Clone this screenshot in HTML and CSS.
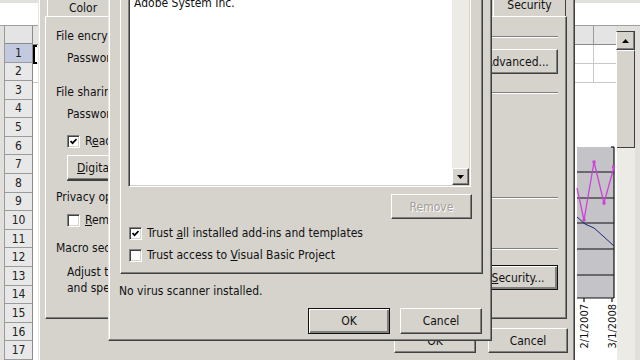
FILE: index.html
```html
<!DOCTYPE html>
<html>
<head>
<meta charset="utf-8">
<link rel="stylesheet" href="styles.css">
</head>
<body>
<div class="desk">
  <div class="excel">
    <div class="xl-formula"></div>
    <div class="xl-sheet">
      <div class="rowheads">
        <div class="corner"></div>
        <div class="rn sel">1</div><div class="rn">2</div><div class="rn">3</div><div class="rn">4</div>
        <div class="rn">5</div><div class="rn">6</div><div class="rn">7</div><div class="rn">8</div>
        <div class="rn">9</div><div class="rn">10</div><div class="rn">11</div><div class="rn">12</div>
        <div class="rn">13</div><div class="rn">14</div><div class="rn">15</div><div class="rn">16</div>
        <div class="rn">17</div>
      </div>
      <div class="cells">
        <div class="colhdr"></div>
        <div class="grid">
          <div class="activecell"></div>
          <svg class="chart" width="42" height="280" viewBox="0 0 42 280">
            <rect x="0" y="0" width="42" height="280" fill="#fff"/>
            <rect x="2" y="64" width="37" height="151" fill="#c3c3c8"/>
            <g stroke="#111" stroke-width="1.2">
              <line x1="2" y1="89" x2="39" y2="89"/>
              <line x1="2" y1="115" x2="39" y2="115"/>
              <line x1="2" y1="140" x2="39" y2="140"/>
              <line x1="2" y1="166" x2="39" y2="166"/>
              <line x1="2" y1="192" x2="39" y2="192"/>
              <line x1="39" y1="64" x2="39" y2="215"/>
              <line x1="36" y1="64" x2="39" y2="64"/>
              <line x1="2" y1="215" x2="39" y2="215"/>
              <line x1="9" y1="215" x2="9" y2="219"/>
              <line x1="37" y1="215" x2="37" y2="219"/>
            </g>
            <polyline points="2,105 9,137 19,79 29,120 39,84" fill="none" stroke="#d040d8" stroke-width="1.3"/>
            <g fill="#d040d8">
              <rect x="7.5" y="135.5" width="3" height="3"/>
              <rect x="17.5" y="77.5" width="3" height="3"/>
              <rect x="27.5" y="118.5" width="3" height="3"/>
              <rect x="37" y="82.5" width="3" height="3"/>
            </g>
            <polyline points="2,134 10,141 19,145 28,153 39,163" fill="none" stroke="#1c2a78" stroke-width="1"/>
            <text class="axl" transform="rotate(-90 13 221)" x="13" y="221" text-anchor="end">2/1/2007</text>
            <text class="axl" transform="rotate(-90 41 221)" x="41" y="221" text-anchor="end">3/1/2008</text>
          </svg>
        </div>
      </div>
      <div class="vscroll">
        <div class="sbtn"><svg width="7" height="4" viewBox="0 0 7 4"><path d="M3.5 0 L7 4 L0 4 Z" fill="#000"/></svg></div>
        <div class="thumb"></div>
        <div class="track"></div>
      </div>
      <div class="frame"></div>
    </div>
  </div>

  <div class="dlg opts">
    <div class="tabs">
      <div class="tab">Color</div>
      <div class="tabgap"></div>
      <div class="tab active">Security</div>
    </div>
    <div class="panel opanel">
      <div class="ghead"><span>File encryption settings for this workbook</span><i></i></div>
      <div class="orow r1">
        <span class="ind">Password to open:</span>
        <div class="btn w82">Advanced...</div>
      </div>
      <div class="ghead g2"><span>File sharing settings for this workbook</span><i></i></div>
      <div class="orow r2"><span class="ind">Password to modify:</span></div>
      <div class="chkrow c1"><span class="chk on"><svg width="7" height="7" viewBox="0 0 7 7"><path d="M0.5 3 L2.6 5.2 L6.6 1" stroke="#000" stroke-width="1.7" fill="none"/></svg></span><span>R<u>e</u>ad-only recommended</span></div>
      <div class="btn digital"><span><u>D</u>igital Signatures...</span></div>
      <div class="ghead g3"><span>Privacy options</span><i></i></div>
      <div class="chkrow c2"><span class="chk"></span><span><u>R</u>emove personal information from file properties on save</span></div>
      <div class="ghead g4"><span>Macro security</span><i></i></div>
      <div class="orow r3">
        <p class="ind para">Adjust the security level for opening files that might contain macro viruses<br>and specify the names of trusted macro developers.</p>
        <div class="btn def w116"><span>Macro <u>S</u>ecurity...</span></div>
      </div>
    </div>
    <div class="btnrow obtns">
      <div class="btn w82">OK</div>
      <div class="btn w80">Cancel</div>
    </div>
  </div>

  <div class="dlg sec">
    <div class="panel spanel">
      <div class="listbox">
        <div class="items"><div class="item">Adobe System Inc.</div></div>
        <div class="lscroll">
          <div class="sbtn"><svg width="7" height="4" viewBox="0 0 7 4"><path d="M3.5 0 L7 4 L0 4 Z" fill="#000"/></svg></div>
          <div class="ltrack"></div>
          <div class="sbtn"><svg width="7" height="4" viewBox="0 0 7 4"><path d="M0 0 L7 0 L3.5 4 Z" fill="#000"/></svg></div>
        </div>
      </div>
      <div class="rmrow"><div class="btn w81 disabled">Remove</div></div>
      <div class="chkrow s1"><span class="chk on"><svg width="7" height="7" viewBox="0 0 7 7"><path d="M0.5 3 L2.6 5.2 L6.6 1" stroke="#000" stroke-width="1.7" fill="none"/></svg></span><span>Trust <u>a</u>ll installed add-ins and templates</span></div>
      <div class="chkrow s2"><span class="chk"></span><span>Trust access to <u>V</u>isual Basic Project</span></div>
    </div>
    <div class="status">No virus scanner installed.</div>
    <div class="btnrow sbtns">
      <div class="btn def w82">OK</div>
      <div class="btn w82">Cancel</div>
    </div>
  </div>
</div>
</body>
</html>
```

FILE: styles.css
```css
* { box-sizing: border-box; }
html, body { margin: 0; padding: 0; }
body {
  width: 640px; height: 360px; overflow: hidden;
  font-family: Tahoma, "DejaVu Sans Condensed", "DejaVu Sans", sans-serif;
  font-size: 11px; color: #111;
}
.desk { position: relative; width: 640px; height: 360px; overflow: hidden; background: #d6d3cd; }

/* Excel background */
.excel { display: flex; flex-direction: column; width: 640px; height: 360px; }
.xl-formula { height: 26px; background: #fff; border-top: 3px solid #e2e0dc; border-bottom: 1px solid #a0a0a0; }
.xl-sheet { flex: 1; display: flex; min-height: 0; padding-left: 4px; background: #e2e0dc; }
.rowheads { width: 29px; display: flex; flex-direction: column; background: #e6e6e6; border-left: 1px solid #9a9a9a; }
.corner { height: 19px; border-bottom: 1px solid #8a8a8a; border-right: 1px solid #8a8a8a; background: #e4e4e4; }
.rn {
  height: 18.6px; flex: none; display: flex; align-items: center; justify-content: center;
  font-family: Tahoma, "DejaVu Sans Condensed", "DejaVu Sans", sans-serif; font-size: 12px; color: #222;
  border-bottom: 1px solid #9c9c9c; border-right: 1px solid #8a8a8a; background: #e8e8e8;
}
.rn.sel { background: #c3c9de; }
.cells { flex: 1; display: flex; flex-direction: column; min-width: 0; }
.colhdr {
  height: 19px; flex: none; background: #e4e4e4; border-bottom: 1px solid #8a8a8a;
  background-image: linear-gradient(to right, transparent 560px, #9a9a9a 560px, #9a9a9a 561px, transparent 561px);
}
.grid {
  position: relative; flex: 1; background: #fff;
  background-image:
    linear-gradient(to bottom, transparent 17.6px, #c8c8c8 17.6px, #c8c8c8 18.6px, transparent 18.6px),
    linear-gradient(to bottom, transparent 36.6px, #c8c8c8 36.6px, #c8c8c8 37.6px, transparent 37.6px),
    linear-gradient(to right, transparent 560px, #c8c8c8 560px, #c8c8c8 561px, transparent 561px);
  background-size: 100% 100%, 100% 100%, 100% 40px;
  background-repeat: no-repeat;
}
.activecell { position: absolute; left: 0; top: 0; width: 4px; height: 19px; border-left: 2px solid #000; border-top: 2px solid #000; border-bottom: 2px solid #000; }
.chart { position: absolute; left: 542px; top: 38px; }
.axl { font-family: Tahoma, "DejaVu Sans Condensed", "DejaVu Sans", sans-serif; font-size: 11px; fill: #111; }
.vscroll { width: 19px; display: flex; flex-direction: column; padding-top: 5px; background: #e2e0dc; }
.vscroll .sbtn { height: 19px; border-top: 1px solid #404040; }
.thumb { height: 98px; background: #d6d3cd; border: 1px solid; border-color: #fff #404040 #404040 #fff; }
.track { flex: 1; background: #ecebe6; }
.frame { width: 5px; background: #e2e0dc; }

.sbtn {
  flex: none; display: flex; align-items: center; justify-content: center;
  background: #d6d3cd; border: 1px solid; border-color: #fff #404040 #404040 #fff;
  box-shadow: inset -1px -1px 0 #808080;
}

/* dialogs */
.dlg {
  position: absolute; background: #d6d3cd;
  border: 1px solid; border-color: #e8e6e2 #404040 #404040 #e8e6e2;
  box-shadow: inset -1px -1px 0 #808080, inset 1px 1px 0 #fff;
  display: flex; flex-direction: column;
}
.panel {
  border: 1px solid; border-color: #fff #404040 #404040 #fff;
  box-shadow: inset -1px -1px 0 #808080;
}
.btn {
  flex: none; height: 25px; display: flex; align-items: center; justify-content: center;
  background: #d6d3cd; border: 1px solid; border-color: #fff #404040 #404040 #fff;
  box-shadow: inset -1px -1px 0 #808080; color: #111; white-space: nowrap; overflow: hidden;
}
.btn.def { border: 1px solid #111; box-shadow: inset 1px 1px 0 #fff, inset -2px -2px 0 #808080; }
.btn.disabled { color: #a3a09a; text-shadow: 1px 1px 0 #fff; }
.w80 { width: 80px; } .w81 { width: 81px; } .w82 { width: 82px; } .w116 { width: 116px; }

.chk {
  flex: none; width: 13px; height: 13px; background: #fff; display: flex; align-items: center; justify-content: center;
  border: 1px solid; border-color: #808080 #fff #fff #808080;
  box-shadow: inset 1px 1px 0 #404040, inset -1px -1px 0 #d6d3cd;
}
.chkrow { display: flex; align-items: center; height: 13px; line-height: 13px; white-space: nowrap; }
.chkrow .chk + span { margin-left: 5px; }

/* options dialog (back) */
.opts { left: 38px; top: -6px; width: 537px; height: 380px; padding: 0 7px 0 6px; }
.tabs { height: 21px; display: flex; align-items: flex-end; padding-left: 2px; }
.tab {
  height: 17px; padding-top: 1px; width: 72px; text-align: center; line-height: 14px;
  border: 1px solid; border-bottom: none; border-color: #fff #404040 transparent #fff;
  border-radius: 2px 2px 0 0; font-size: 12px;
}
.tab.active { height: 20px; width: 73px; margin-right: 1px; line-height: 16px; padding-top: 0; }
.tabgap { flex: 1; }
.opanel { height: 303px; padding: 13px 8px 0 10px; display: flex; flex-direction: column; font-size: 12px; }
.ghead { display: flex; align-items: center; height: 13px; line-height: 13px; white-space: nowrap; }
.ghead i { flex: 1; margin-left: 5px; height: 2px; border-top: 1px solid #808080; border-bottom: 1px solid #fff; }
.ind { margin-left: 11px; white-space: nowrap; }
.orow { display: flex; justify-content: space-between; align-items: flex-start; }
.r1 { margin-top: 6px; height: 25px; padding-top: 2px; }
.r1 .btn { margin-top: -2px; }
.g2 { margin-top: 12px; }
.r2 { margin-top: 9px; height: 13px; line-height: 13px; }
.c1 { margin-top: 14px; margin-left: 11px; }
.digital { width: 120px; margin-top: 7px; margin-left: 11px; justify-content: flex-start; padding-left: 9px; box-shadow: inset -1px -1px 0 #808080, 0 1px 0 #404040; }
.g3 { margin-top: 11px; }
.c2 { margin-top: 10px; margin-left: 11px; }
.g4 { margin-top: 15px; }
.r3 { margin-top: 9px; height: 32px; }
.para { flex: 1; min-width: 0; overflow: hidden; margin: 0 8px 0 11px; line-height: 16px; white-space: nowrap; }
.r3 .btn { margin-top: 1px; }
.btnrow { display: flex; justify-content: flex-end; }
.obtns { margin-top: 9px; gap: 12px; margin-right: -1px; font-size: 12px; }

/* security dialog (front) */
.sec { left: 108px; top: -40px; width: 384px; height: 381px; padding: 10px 8px 0 11px; }
.spanel { height: 303px; padding: 9px 0 0 7px; display: flex; flex-direction: column; }
.listbox {
  width: 343px; height: 206px; flex: none; background: #fff; display: flex;
  border: 1px solid; border-color: #808080 #fff #fff #808080;
  box-shadow: inset 1px 1px 0 #404040, inset -1px -1px 0 #d6d3cd;
  padding: 1px;
}
.items { flex: 1; padding: 14px 0 0 4px; }
.item { line-height: 13px; font-size: 12px; }
.lscroll { width: 17px; display: flex; flex-direction: column; }
.lscroll .sbtn { height: 17px; }
.ltrack { flex: 1; background: #ecebe6; }
.rmrow { display: flex; justify-content: flex-end; margin-top: 7px; padding-right: 10px; font-size: 12px; }
.s1 { margin-top: 8px; margin-left: 1px; font-size: 12px; }
.s2 { margin-top: 9px; margin-left: 1px; font-size: 12px; }
.status { margin-top: 11px; margin-left: -1px; line-height: 13px; font-size: 12px; }
.sbtns { margin-top: 10px; gap: 10px; margin-right: 1px; font-size: 12px; }
.sbtns .btn { height: 26px; }
```
